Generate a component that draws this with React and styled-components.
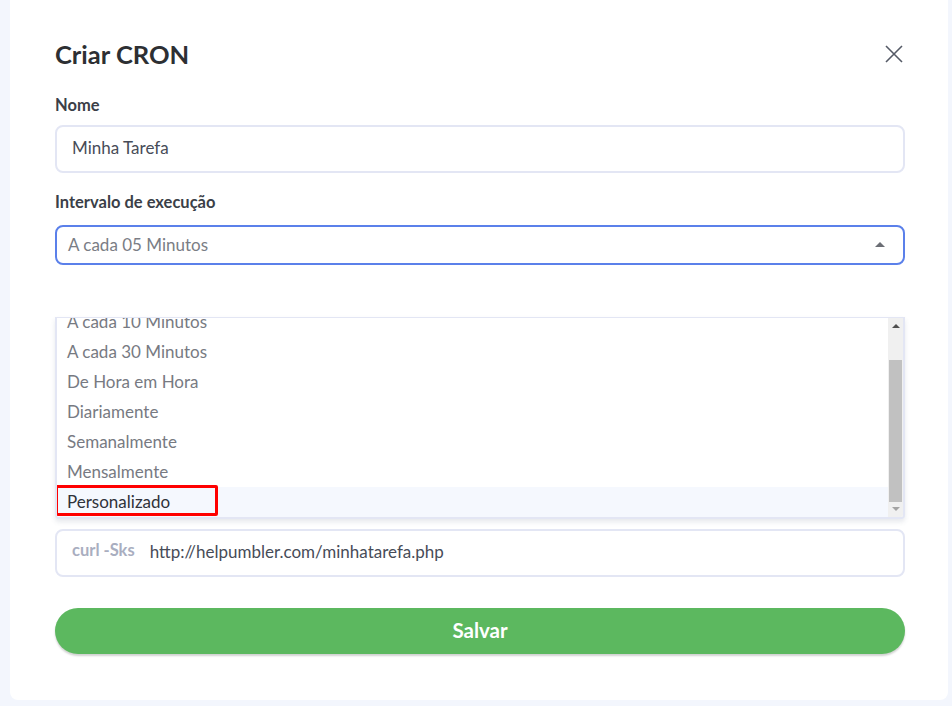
import React from "react"
import styled, { createGlobalStyle } from "styled-components"

const GlobalStyle = createGlobalStyle`
  html, body {
    margin: 0;
    padding: 0;
    background: #f3f6fd;
    font-family: Lato, "Open Sans", sans-serif;
  }
  * { box-sizing: border-box; }
`

const Page = styled.div`
  width: 952px;
  height: 706px;
  padding: 0 4px 6px 10px;
  display: flex;
`

const Card = styled.div`
  flex: 1;
  background: #fff;
  border-radius: 0 0 8px 8px;
  padding: 38px 43px 0 45px;
  display: flex;
  flex-direction: column;
`

const Header = styled.div`
  display: flex;
  justify-content: space-between;
  align-items: center;
  height: 32px;
`

const Title = styled.h2`
  margin: 0;
  font-size: 25.5px;
  font-weight: 700;
  color: #2d2f33;
`

const CloseButton = styled.button`
  border: none;
  background: none;
  padding: 0;
  margin-right: 1px;
  width: 20px;
  height: 20px;
  display: flex;
  align-items: center;
  justify-content: center;
  cursor: pointer;
`

const Label = styled.div`
  font-size: 16.5px;
  font-weight: 700;
  color: #3b3f48;
  margin-top: ${p => p.$mt}px;
  height: 18px;
  line-height: 18px;
`

const TextBox = styled.div`
  margin-top: ${p => p.$mt}px;
  height: ${p => p.$h}px;
  border: 2px solid ${p => (p.$focus ? "#5b80ea" : "#e3e6f4")};
  border-radius: 8px;
  display: flex;
  align-items: center;
  padding: 0 ${p => (p.$focus ? 18 : 15)}px ${p => (p.$focus ? 1 : 3)}px ${p => (p.$focus ? 11 : 15)}px;
  font-size: 17px;
  color: ${p => (p.$muted ? "#7a7d85" : "#474c58")};
`

const Grow = styled.span`
  flex: 1;
`

const Caret = styled.span`
  width: 0;
  height: 0;
  border-left: 5px solid transparent;
  border-right: 5px solid transparent;
  border-bottom: 5px solid #6b6e75;
`

const SelectArea = styled.div`
  position: relative;
`

const HiddenField = styled.div`
  margin-top: 52px;
  height: 201px;
`

const Dropdown = styled.div`
  position: absolute;
  left: 0;
  right: 0;
  top: 106px;
  height: 202px;
  background: #fff;
  border: 2px solid #e3e6f4;
  border-top-width: 1px;
  border-radius: 0 0 4px 4px;
  box-shadow: 0 3px 5px rgba(60, 70, 110, 0.12);
  display: flex;
  overflow: hidden;
  z-index: 2;
`

const Options = styled.div`
  flex: 1;
  margin-top: -11px;
`

const Option = styled.div`
  position: relative;
  height: 30px;
  line-height: 30px;
  padding-left: 10px;
  font-size: 17px;
  color: ${p => (p.$active ? "#2f323a" : "#777a82")};
  background: ${p => (p.$active ? "#f5f8fe" : "#fff")};
`

const Highlight = styled.span`
  position: absolute;
  left: -2px;
  top: -2px;
  width: 163px;
  height: 31px;
  border: 3px solid #f00;
  border-radius: 2px;
`

const Scrollbar = styled.div`
  width: 15px;
  background: #f0f0f0;
  display: flex;
  flex-direction: column;
  align-items: center;
`

const ScrollArrow = styled.div`
  height: 17px;
  display: flex;
  align-items: center;
  justify-content: center;
  &::after {
    content: "";
    border-left: 4px solid transparent;
    border-right: 4px solid transparent;
    ${p => (p.$down ? "border-top: 4px solid #a3a3a3;" : "border-bottom: 4px solid #505050;")}
  }
`

const Track = styled.div`
  flex: 1;
  width: 100%;
  padding: 26px 1px 0;
`

const Thumb = styled.div`
  height: 142px;
  background: #c1c1c1;
`

const Prefix = styled.span`
  font-size: 16.5px;
  font-weight: 700;
  color: #a9aec0;
  margin-right: 15px;
  margin-top: -4px;
`

const SaveButton = styled.button`
  margin-top: 31px;
  height: 46px;
  padding-bottom: 3px;
  border: none;
  border-radius: 23px;
  background: #5cb85f;
  color: #fff;
  font-family: Lato, sans-serif;
  font-size: 20.5px;
  font-weight: 700;
  box-shadow: 0 2px 2px rgba(0, 0, 0, 0.18);
  cursor: pointer;
`

const options = [
  "A cada 10 Minutos",
  "A cada 30 Minutos",
  "De Hora em Hora",
  "Diariamente",
  "Semanalmente",
  "Mensalmente",
  "Personalizado",
]

export default function App() {
  return (
    <Page>
      <GlobalStyle />
      <Card>
        <Header>
          <Title>Criar CRON</Title>
          <CloseButton aria-label="Fechar">
            <svg width="18" height="18" viewBox="0 0 18 18">
              <path d="M1 1 L17 17 M17 1 L1 17" stroke="#555a66" strokeWidth="1.6" />
            </svg>
          </CloseButton>
        </Header>

        <Label $mt={26}>Nome</Label>
        <TextBox $mt={11} $h={48}>Minha Tarefa</TextBox>

        <Label $mt={20}>Intervalo de execução</Label>
        <SelectArea>
          <TextBox $mt={14} $h={40} $focus $muted>
            <Grow>A cada 05 Minutos</Grow>
            <Caret />
          </TextBox>
          <HiddenField />
          <Dropdown>
            <Options>
              {options.map(o => (
                <Option key={o} $active={o === "Personalizado"}>
                  {o}
                  {o === "Personalizado" && <Highlight />}
                </Option>
              ))}
            </Options>
            <Scrollbar>
              <ScrollArrow />
              <Track>
                <Thumb />
              </Track>
              <ScrollArrow $down />
            </Scrollbar>
          </Dropdown>
        </SelectArea>

        <TextBox $mt={11} $h={48}>
          <Prefix>curl -Sks</Prefix>
          http://helpumbler.com/minhatarefa.php
        </TextBox>

        <SaveButton>Salvar</SaveButton>
      </Card>
    </Page>
  )
}
